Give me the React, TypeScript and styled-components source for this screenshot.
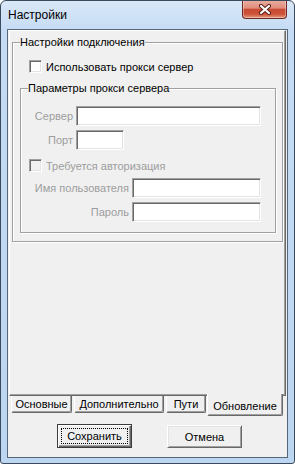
import React from "react";
import styled, { createGlobalStyle } from "styled-components";

const GlobalStyle = createGlobalStyle`
  html, body {
    margin: 0;
    padding: 0;
    background: #ffffff;
  }
  body {
    font-family: "Liberation Sans", Arial, sans-serif;
  }
`;

const Window = styled.div`
  width: 295px;
  height: 464px;
  box-sizing: border-box;
  border: 1px solid #3a4b5d;
  border-radius: 6px 6px 3px 3px;
  background: linear-gradient(to bottom, #d9e8f8 0px, #c6dcf4 28px, #bcd5f0 100%);
  display: flex;
  flex-direction: column;
  font-family: "Liberation Sans", Arial, sans-serif;
  font-size: 11px;
  color: #000;
  overflow: hidden;
`;

const TitleBar = styled.div`
  height: 28px;
  flex: none;
  display: flex;
  align-items: flex-start;
  padding: 0 7px;
`;

const Title = styled.span`
  line-height: 28px;
  font-size: 12px;
  color: #000;
`;

const CloseButton = styled.div`
  margin-left: auto;
  margin-top: -1px;
  width: 45px;
  height: 19px;
  box-sizing: border-box;
  border: 1px solid #6e2a20;
  border-top: none;
  border-radius: 0 0 4px 4px;
  background: linear-gradient(
    to bottom,
    #eab0a3 0%,
    #df8c7b 45%,
    #c94a33 52%,
    #cd5238 78%,
    #e49a7f 100%
  );
  box-shadow: inset 0 0 0 1px rgba(255, 255, 255, 0.35);
  display: flex;
  align-items: center;
  justify-content: center;
`;

const Client = styled.div`
  flex: 1;
  margin: 0 6px 5px;
  border: 1px solid #55677a;
  background: #f0f0f0;
  display: flex;
  flex-direction: column;
`;

const TabPanel = styled.div`
  height: 366px;
  flex: none;
  box-sizing: border-box;
  margin: 0 1px;
  padding: 0 2px;
  border-top: 1px solid #ffffff;
  border-left: 1px solid #ffffff;
  border-right: 1px solid #696969;
  border-bottom: 1px solid #696969;
  box-shadow: inset -1px -1px 0 #a0a0a0;
`;

const GroupBox = styled.fieldset<{ $margin: string; $inner?: boolean }>`
  margin: ${(p) => p.$margin};
  padding: 0 0 ${(p) => (p.$inner ? "10px" : "0")} 0;
  min-width: 0;
  border: 1px solid #a0a0a0;
  box-shadow: inset 1px 1px 0 #ffffff, 1px 1px 0 #ffffff;
`;

const GroupTitle = styled.legend`
  margin-left: 7px;
  padding: 0;
  line-height: 13px;
  background: #f0f0f0;
  color: #000;
`;

const CheckRow = styled.div<{ $top: number; $left: number; $disabled?: boolean }>`
  display: flex;
  align-items: center;
  gap: 4px;
  margin-top: ${(p) => p.$top}px;
  padding-left: ${(p) => p.$left}px;
  height: 13px;
  color: ${(p) => (p.$disabled ? "#9d9d9d" : "#000")};
`;

const CheckBox = styled.span<{ $disabled?: boolean }>`
  width: 13px;
  height: 13px;
  flex: none;
  box-sizing: border-box;
  border: 1px solid;
  border-color: #a0a0a0 #ffffff #ffffff #a0a0a0;
  box-shadow: inset 1px 1px 0 #696969, inset -1px -1px 0 #e3e3e3;
  background: ${(p) => (p.$disabled ? "#f0f0f0" : "#ffffff")};
`;

const FieldRow = styled.div<{ $top: number }>`
  display: flex;
  align-items: center;
  gap: 3px;
  margin-top: ${(p) => p.$top}px;
`;

const FieldLabel = styled.span<{ $width: number }>`
  width: ${(p) => p.$width}px;
  flex: none;
  text-align: right;
  color: #9d9d9d;
  white-space: nowrap;
`;

const TextInput = styled.input<{ $width: number }>`
  width: ${(p) => p.$width}px;
  height: 20px;
  box-sizing: border-box;
  margin: 0;
  padding: 0 3px;
  border: 1px solid;
  border-color: #a0a0a0 #ffffff #ffffff #a0a0a0;
  box-shadow: inset 1px 1px 0 #696969, inset -1px -1px 0 #e3e3e3;
  background: #ffffff;
  font: inherit;
  outline: none;
`;

const TabStrip = styled.div`
  height: 20px;
  flex: none;
  display: flex;
  align-items: flex-start;
  gap: 2px;
  padding-left: 3px;
`;

const Tab = styled.div<{ $width: number; $active?: boolean }>`
  width: ${(p) => p.$width}px;
  height: ${(p) => (p.$active ? 22 : 17)}px;
  margin-top: ${(p) => (p.$active ? -2 : 0)}px;
  margin-left: ${(p) => (p.$active ? -1 : 0)}px;
  position: relative;
  z-index: ${(p) => (p.$active ? 1 : 0)};
  box-sizing: border-box;
  border-left: 1px solid #ffffff;
  border-right: 1px solid #696969;
  border-bottom: 1px solid #696969;
  border-radius: 0 0 2px 2px;
  box-shadow: inset -1px -1px 0 #a0a0a0;
  background: #f0f0f0;
  display: flex;
  align-items: center;
  justify-content: center;
  padding-top: ${(p) => (p.$active ? 3 : 0)}px;
  white-space: nowrap;
`;

const ButtonRow = styled.div`
  display: flex;
  align-items: flex-start;
  gap: 35px;
  margin-top: 8px;
  padding-left: 49px;
`;

const Button = styled.div<{ $default?: boolean }>`
  width: 75px;
  height: ${(p) => (p.$default ? 24 : 23)}px;
  margin-top: ${(p) => (p.$default ? 0 : 1)}px;
  box-sizing: border-box;
  display: flex;
  padding: ${(p) => (p.$default ? "3px" : "0")};
  border: 1px solid;
  border-color: ${(p) =>
    p.$default ? "#3c3c3c" : "#ffffff #696969 #696969 #ffffff"};
  box-shadow: ${(p) =>
    p.$default
      ? "inset 1px 1px 0 #ffffff, inset -1px -1px 0 #696969, inset -2px -2px 0 #a0a0a0"
      : "inset 1px 1px 0 #e3e3e3, inset -1px -1px 0 #a0a0a0"};
  background: #f0f0f0;
`;

const ButtonFace = styled.span<{ $focused?: boolean }>`
  flex: 1;
  display: flex;
  align-items: center;
  justify-content: center;
  border: 1px dotted ${(p) => (p.$focused ? "#000" : "transparent")};
`;

const CloseGlyph = () => (
  <svg width="12" height="11" viewBox="0 0 12 11">
    <path
      d="M2 2 L10 9 M10 2 L2 9"
      stroke="#5a1f16"
      strokeWidth="4.2"
      strokeLinecap="round"
      fill="none"
    />
    <path
      d="M2 2 L10 9 M10 2 L2 9"
      stroke="#ffffff"
      strokeWidth="2.2"
      strokeLinecap="round"
      fill="none"
    />
  </svg>
);

export default function App() {
  return (
    <>
      <GlobalStyle />
      <Window>
        <TitleBar>
          <Title>Настройки</Title>
          <CloseButton>
            <CloseGlyph />
          </CloseButton>
        </TitleBar>
        <Client>
          <TabPanel>
            <GroupBox $margin="5px 0 0 0">
              <GroupTitle>Настройки подключения</GroupTitle>
              <CheckRow $top={11} $left={16}>
                <CheckBox />
                <span>Использовать прокси сервер</span>
              </CheckRow>
              <GroupBox $margin="9px 6px 8px 7px" $inner>
                <GroupTitle>Параметры прокси сервера</GroupTitle>
                <FieldRow $top={11}>
                  <FieldLabel $width={52}>Сервер</FieldLabel>
                  <TextInput $width={185} readOnly />
                </FieldRow>
                <FieldRow $top={4}>
                  <FieldLabel $width={52}>Порт</FieldLabel>
                  <TextInput $width={48} readOnly />
                </FieldRow>
                <CheckRow $top={9} $left={8} $disabled>
                  <CheckBox $disabled />
                  <span>Требуется авторизация</span>
                </CheckRow>
                <FieldRow $top={6}>
                  <FieldLabel $width={108}>Имя пользователя</FieldLabel>
                  <TextInput $width={129} readOnly />
                </FieldRow>
                <FieldRow $top={4}>
                  <FieldLabel $width={108}>Пароль</FieldLabel>
                  <TextInput $width={129} readOnly />
                </FieldRow>
              </GroupBox>
            </GroupBox>
          </TabPanel>
          <TabStrip>
            <Tab $width={61}>Основные</Tab>
            <Tab $width={90}>Дополнительно</Tab>
            <Tab $width={40}>Пути</Tab>
            <Tab $width={76} $active>
              Обновление
            </Tab>
          </TabStrip>
          <ButtonRow>
            <Button $default>
              <ButtonFace $focused>Сохранить</ButtonFace>
            </Button>
            <Button>
              <ButtonFace>Отмена</ButtonFace>
            </Button>
          </ButtonRow>
        </Client>
      </Window>
    </>
  );
}
